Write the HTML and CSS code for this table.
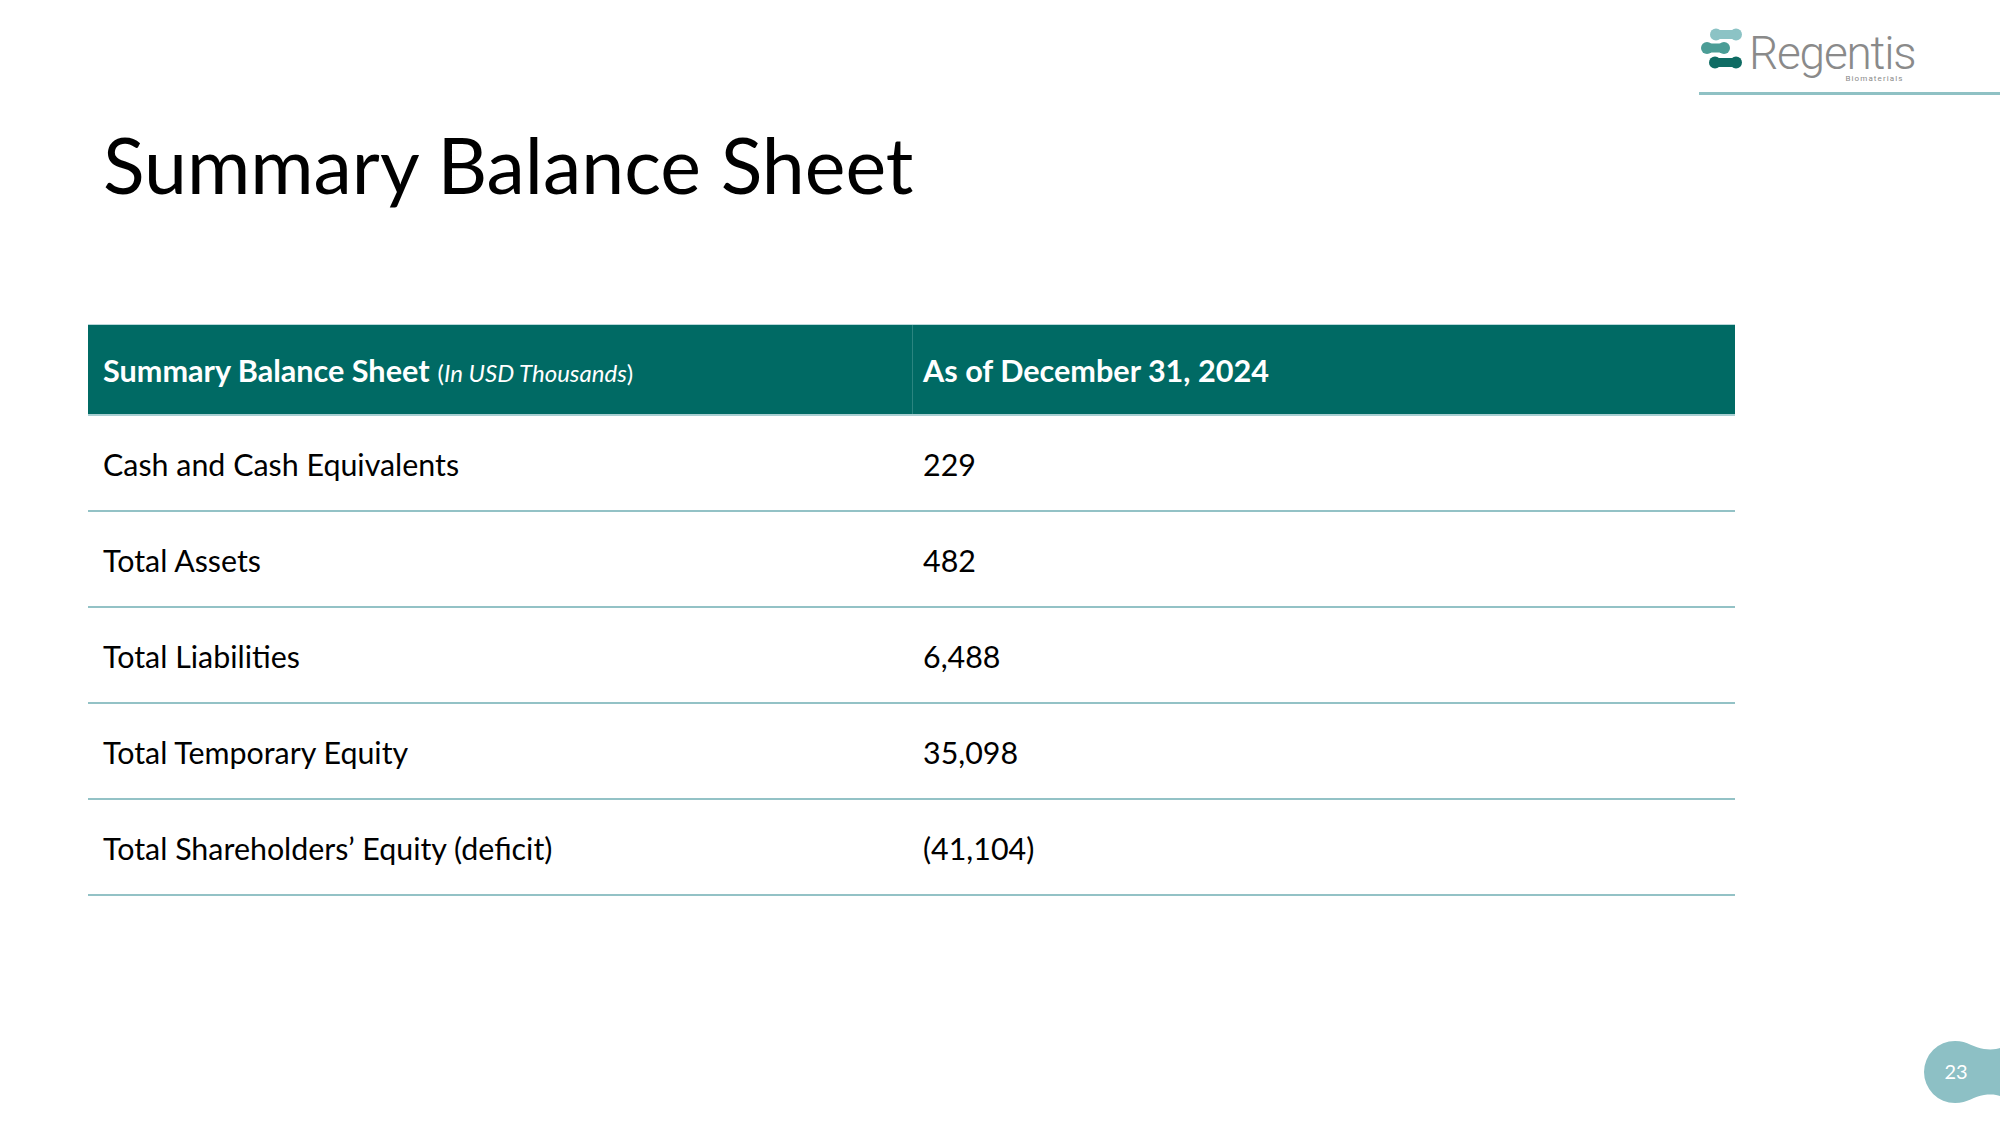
FILE: index.html
```html
<!DOCTYPE html>
<html lang="en">
<head>
<meta charset="utf-8">
<title>Summary Balance Sheet</title>
<link rel="stylesheet" href="styles.css">
</head>
<body>
<div class="slide">
  <header class="brand">
    <div class="logo">
      <svg class="logo-mark" width="46" height="42" viewBox="0 0 46 42">
        <g fill="#8cc3c5">
          <circle cx="17" cy="6.5" r="6"/><circle cx="37" cy="6.5" r="6"/><rect x="17" y="2" width="20" height="9" rx="3"/>
        </g>
        <g fill="#4b9d96">
          <circle cx="8" cy="20" r="6"/><circle cx="25" cy="20" r="6"/><rect x="8" y="15.5" width="17" height="9" rx="3"/>
        </g>
        <g fill="#0f6c64">
          <circle cx="16" cy="34.5" r="6"/><circle cx="37" cy="34.5" r="6"/><rect x="16" y="30" width="21" height="9" rx="3"/>
        </g>
      </svg>
      <div class="wordmark">
        <span class="word">Regentis</span>
        <span class="sub">Biomaterials</span>
      </div>
    </div>
  </header>

  <h1 class="title">Summary Balance Sheet</h1>

  <div class="sheet">
    <div class="row head">
      <div class="cell first"><b>Summary Balance Sheet</b> <span class="unit">(<i>In USD Thousands</i>)</span></div>
      <div class="cell second"><b>As of December 31, 2024</b></div>
    </div>
    <div class="row">
      <div class="cell first">Cash and Cash Equivalents</div>
      <div class="cell second">229</div>
    </div>
    <div class="row">
      <div class="cell first">Total Assets</div>
      <div class="cell second">482</div>
    </div>
    <div class="row">
      <div class="cell first">Total Liabilities</div>
      <div class="cell second">6,488</div>
    </div>
    <div class="row">
      <div class="cell first">Total Temporary Equity</div>
      <div class="cell second">35,098</div>
    </div>
    <div class="row">
      <div class="cell first">Total Shareholders’ Equity (deficit)</div>
      <div class="cell second">(41,104)</div>
    </div>
  </div>

  <div class="page-num">
    <svg width="80" height="70" viewBox="0 0 80 70">
      <path fill="#8dc0c5" d="M35 4 A31 31 0 0 0 35 66 C48 66 54 59 64 58 C72 57 77 58 80 59 L80 11 C77 12 72 13 64 12 C54 11 48 4 35 4 Z"/>
      <text x="36" y="42" text-anchor="middle" class="num">23</text>
    </svg>
  </div>
</div>
</body>
</html>
```

FILE: styles.css
```css
html, body {
  margin: 0;
  padding: 0;
  background: #ffffff;
}

.slide {
  position: relative;
  width: 2000px;
  height: 1124px;
  overflow: hidden;
  background: #ffffff;
  font-family: "Lato", "Carlito", "Liberation Sans", sans-serif;
  color: #000000;
}

.brand {
  display: flex;
  justify-content: flex-end;
  padding-top: 28px;
}

.logo {
  width: 301px;
  height: 64px;
  border-bottom: 3px solid #8fc1c4;
  display: flex;
  align-items: flex-start;
}

.logo-mark {
  display: block;
  flex: none;
}

.wordmark {
  display: flex;
  flex-direction: column;
  margin-left: 4px;
}

.word {
  margin-top: 3px;
  font-family: "Roboto", "Liberation Sans", sans-serif;
  font-weight: 300;
  font-size: 46px;
  line-height: 44px;
  color: #8a8a8a;
  letter-spacing: -1.2px;
}

.sub {
  align-self: flex-end;
  margin-right: 12px;
  margin-top: 0;
  font-family: "Roboto", "Liberation Sans", sans-serif;
  font-size: 8px;
  line-height: 8px;
  letter-spacing: 1.1px;
  color: #8a8a8a;
}

.title {
  margin: 31px 0 0 103px;
  font-weight: 400;
  font-size: 77px;
  line-height: 77px;
  color: #000000;
}

.sheet {
  margin: 121px 0 0 88px;
  width: 1647px;
}

.row {
  display: grid;
  grid-template-columns: 824px 1fr;
  height: 94px;
  border-bottom: 2px solid #93c2c6;
  font-size: 30.4px;
}

.cell {
  display: flex;
  align-items: center;
  padding-top: 2px;
}

.cell.first {
  padding-left: 15px;
}

.cell.second {
  padding-left: 11px;
}

.row.head {
  height: 89px;
  background: #006a64;
  border-top: 1px solid #b9d8da;
  border-bottom: 2px solid #a9cfd2;
  color: #ffffff;
  font-size: 30.6px;
}

.row.head .cell {
  padding-top: 2px;
}

.row.head .cell.second {
  border-left: 1px solid #2b8580;
  padding-left: 10px;
}

.row.head b {
  font-weight: 700;
}

.unit {
  font-size: 24px;
  margin-left: 8px;
  padding-top: 4px;
}

.page-num {
  position: absolute;
  left: 1920px;
  top: 1037px;
}

.page-num svg {
  display: block;
}

.num {
  font-family: "Lato", "Liberation Sans", sans-serif;
  font-size: 20px;
  fill: #ffffff;
}
```
